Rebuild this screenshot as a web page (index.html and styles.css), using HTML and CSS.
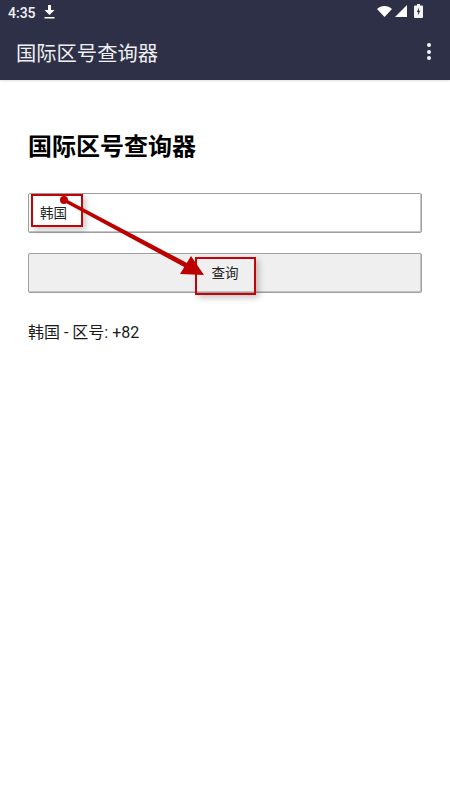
FILE: index.html
```html
<!DOCTYPE html>
<html lang="zh">
<head>
<meta charset="utf-8">
<title>国际区号查询器</title>
<link rel="stylesheet" href="styles.css">
</head>
<body>
<header class="appbar">
  <div class="status">
    <div class="status-left">
      <span class="clock">4:35</span>
      <svg class="dl" width="11" height="14" viewBox="0 0 11 14"><path d="M4 0h3v5h3.500L5.500 10 .5 5H4z" fill="#fff"/><rect x=".5" y="12" width="10" height="1.500" fill="#fff"/></svg>
    </div>
    <div class="status-right">
      <svg width="15" height="11" viewBox="0 0 15 11"><path d="M0 3C4-1 11-1 15 3L7.500 11z" fill="#fff"/></svg>
      <svg width="12" height="12" viewBox="0 0 12 12"><path d="M12 0v12H0z" fill="#fff"/></svg>
      <svg class="batt" width="9" height="14" viewBox="0 0 9 14"><path d="M3 0h3v1.500h2a1 1 0 0 1 1 1V13a1 1 0 0 1-1 1H1a1 1 0 0 1-1-1V2.500a1 1 0 0 1 1-1h2z" fill="#f4f4f4"/><path d="M5 3.500 2.800 8H4.200L3.800 11.500 6.300 6.800H4.800z" fill="#2d3047"/></svg>
    </div>
  </div>
  <div class="toolbar">
    <span class="app-title">国际区号查询器</span>
    <span class="menu"><i></i><i></i><i></i></span>
  </div>
</header>
<main class="content">
  <h1 class="heading">国际区号查询器</h1>
  <div class="field">韩国</div>
  <div class="btn">查询</div>
  <p class="result">韩国 - 区号: +82</p>
</main>
<div class="mark mark-input"></div>
<div class="mark mark-btn"></div>
<svg class="arrow" width="450" height="799" viewBox="0 0 450 799">
  <circle cx="64" cy="200" r="4" fill="#bb0000"/>
  <polygon points="64.800,198.600 63.200,201.400 186,268 188,263.500" fill="#bb0000"/>
  <polygon points="204,275 180,274 191,256" fill="#bb0000"/>
</svg>
</body>
</html>
```
FILE: styles.css
```css
* { box-sizing: border-box; }
html, body { margin: 0; padding: 0; }
body {
  width: 450px;
  height: 799px;
  position: relative;
  overflow: hidden;
  background: #fff;
  font-family: "Roboto", "Noto Sans CJK SC", sans-serif;
  color: #111;
}
.appbar {
  height: 80px;
  background: #2d3047;
  color: #fff;
  box-shadow: 0 1px 2px rgba(0,0,0,.12);
}
.status {
  height: 25px;
  display: flex;
  justify-content: space-between;
  align-items: center;
  padding: 0 27px 0 8px;
}
.status-left { display: flex; align-items: center; gap: 8px; }
.clock { font-size: 14px; font-weight: 500; color: #f2f2f4; }
.dl { display: block; margin-top: -2px; }
.status-right { display: flex; align-items: center; gap: 3px; margin-top: -3px; }
.status-right svg { display: block; }
.batt { margin-left: 4px; }
.toolbar {
  height: 55px;
  display: flex;
  justify-content: space-between;
  align-items: center;
  padding: 0 19px 0 16px;
}
.app-title { font-size: 20.300px; color: #f0f0f2; line-height: 1; margin-top: 4px; }
.menu { display: flex; flex-direction: column; gap: 2.600px; margin-top: -2px; }
.menu i { display: block; width: 4px; height: 4px; border-radius: 50%; background: #f4f4f6; }
.content { padding: 52px 28px 0; }
.heading {
  margin: 0;
  font-size: 24px;
  line-height: 30px;
  font-weight: 700;
  color: #000;
}
.field, .btn {
  width: 394px;
  height: 40px;
  border: 1px solid #a0a0a0;
  border-radius: 2px;
  box-shadow: inset -1px -1px 0 #c4c4c4;
  font-size: 13.500px;
  line-height: 39px;
  color: #222;
}
.field {
  margin-top: 31px;
  padding-left: 11px;
  background: #fff;
}
.btn {
  margin-top: 20px;
  background: #efefef;
  text-align: center;
}
.result {
  margin: 30px 0 0;
  font-size: 16px;
  line-height: 20px;
  color: #1a1a1a;
}
.mark {
  position: absolute;
  border: 2px solid #c00408;
  box-shadow: 3px 3px 6px rgba(0,0,0,.22);
}
.mark-input { left: 31px; top: 194px; width: 52px; height: 33px; }
.mark-btn { left: 195px; top: 257px; width: 61px; height: 38px; }
.arrow { position: absolute; left: 0; top: 0; }
```
